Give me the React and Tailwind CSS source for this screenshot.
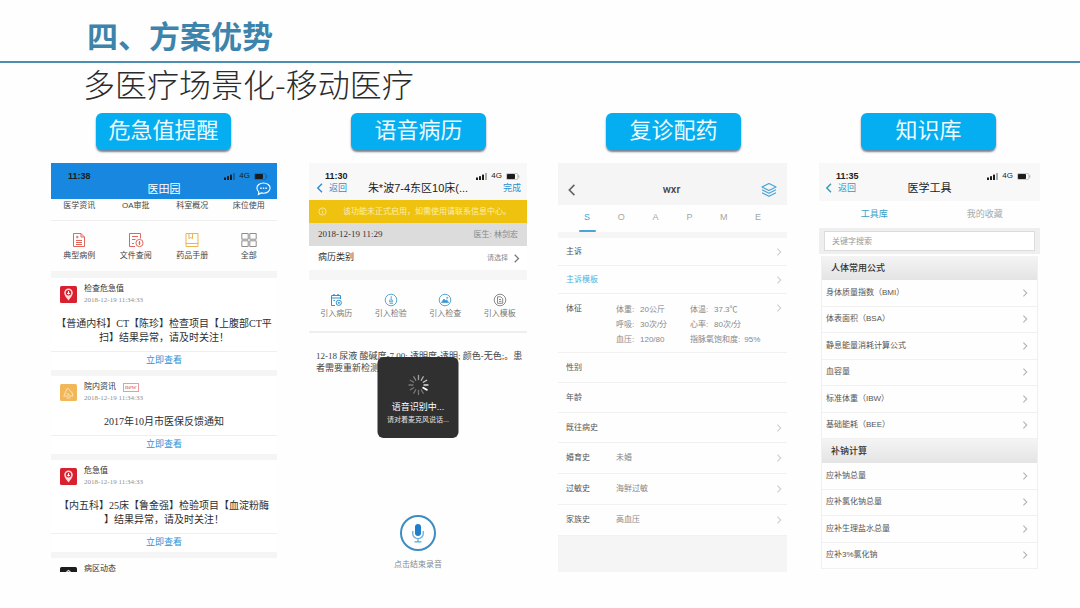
import React, { useState } from "react";

const entries = ["医学资讯", "OA审批", "科室概况", "床位使用"];

const messages = [
  {
    id: 1,
    type: "alert",
    title: "检查危急值",
    lines: ["【普通内科】CT【陈珍】检查项目【上腹部CT平", "扫】结果异常，请及时关注！"],
  },
  {
    id: 2,
    type: "news",
    title: "院内资讯",
    tag: "new",
    lines: ["2017年10月市医保反馈通知"],
  },
  {
    id: 3,
    type: "alert",
    title: "危急值",
    lines: ["【内五科】25床【鲁金强】检验项目【血淀粉酶", "】结果异常，请及时关注！"],
  },
];

const vitals = [
  ["体重:", "20公斤", "体温:", "37.3℃"],
  ["呼吸:", "30次/分", "心率:", "80次/分"],
  ["血压:", "120/80", "指脉氧饱和度:", "95%"],
];

const toolGroups = [
  {
    title: "人体常用公式",
    height: "h-[159px]",
    items: [
      "身体质量指数（BMI）",
      "体表面积（BSA）",
      "静息能量消耗计算公式",
      "血容量",
      "标准体重（IBW）",
      "基础能耗（BEE）",
    ],
  },
  {
    title: "补钠计算",
    height: "h-[106px]",
    items: ["应补钠总量", "应补氯化钠总量", "应补生理盐水总量", "应补3%氯化钠"],
  },
];

const Chevron = ({ className = "text-[#c4c4c4]", flip = false, size = 9 }) => (
  <svg
    width={size}
    height={size}
    viewBox="0 0 10 10"
    fill="none"
    stroke="currentColor"
    strokeWidth="1.4"
    className={`shrink-0 ${className}`}
  >
    <path d={flip ? "M7 .8 2.8 5 7 9.2" : "M3 .8 7.2 5 3 9.2"} />
  </svg>
);

const StatusBar = ({ time, className = "" }) => (
  <div className={`flex items-center justify-between h-3 text-[#1c1c1c] ${className}`}>
    <span className="text-[9px] leading-3 font-bold">{time}</span>
    <span className="flex items-center gap-1">
      <svg width="11" height="7" viewBox="0 0 11 7" fill="currentColor">
        <rect x="0" y="4.5" width="2" height="2.5" />
        <rect x="3" y="3.2" width="2" height="3.8" />
        <rect x="6" y="1.6" width="2" height="5.4" />
        <rect x="9" y="0" width="2" height="7" opacity=".35" />
      </svg>
      <span className="text-[8px] leading-3">4G</span>
      <svg width="14" height="7" viewBox="0 0 14 7">
        <rect x=".4" y=".4" width="11.4" height="6.2" rx="1.4" fill="none" stroke="currentColor" strokeWidth=".6" opacity=".4" />
        <rect x="1" y="1" width="8" height="5" rx=".8" fill="currentColor" />
        <path d="M12.8 2.3v2.4" stroke="currentColor" strokeWidth=".8" opacity=".4" />
      </svg>
    </span>
  </div>
);

const CaseIcon = () => (
  <svg width="16" height="16" viewBox="0 0 16 16" fill="none" stroke="#e2665c" strokeWidth="1">
    <path d="M2.5 1.5h7.5l3.5 3.5v9.5h-11z" />
    <path d="M10 1.5V5h3.5M5 5h2.5M6.2 3.8v2.5M5 8.5h6M5 10.5h6M5 12.5h6" />
  </svg>
);

const FileSearchIcon = () => (
  <svg width="16" height="16" viewBox="0 0 16 16" fill="none" stroke="#e2665c" strokeWidth="1">
    <path d="M12.5 6.5v-5h-11v13H7M4 4.5h6M4 7.5h3.5M4 11.5h2" />
    <circle cx="11.5" cy="11" r="3.6" />
    <path d="M11.5 9v4M10.5 11h2" />
  </svg>
);

const ManualIcon = () => (
  <svg width="16" height="16" viewBox="0 0 16 16" fill="none" stroke="#eab54c" strokeWidth="1">
    <path d="M2 1.5h12v13H2zM2 11.5h12" />
    <path d="M5 1.5v5.2L6.7 5.5l1.8 1.2V1.5" />
  </svg>
);

const GridIcon = () => (
  <svg width="16" height="16" viewBox="0 0 16 16" fill="none" stroke="#8d8d8d" strokeWidth="1">
    <path d="M.8 1.5h6.4v5.7H.8zM8.8 1.5h6.4v5.7H8.8zM.8 8.8h6.4v5.7H.8zM8.8 8.8h6.4v5.7H8.8z" />
  </svg>
);

const AlertAvatar = () => (
  <svg width="17" height="17" viewBox="0 0 17 17" className="shrink-0">
    <rect width="17" height="17" rx="1.5" fill="#d9202e" />
    <path d="M8.5 14.6C6.6 11.9 4.2 9.6 4.2 6.8a4.3 4.3 0 0 1 8.6 0c0 2.8-2.4 5.1-4.3 7.8z" fill="#fbdcdc" />
    <circle cx="8.5" cy="6.7" r="2.7" fill="#d9202e" />
    <path d="M8.5 5v3.4M7 7.4h3" stroke="#fff" strokeWidth="1" />
  </svg>
);

const NewsAvatar = () => (
  <svg width="17" height="17" viewBox="0 0 17 17" className="shrink-0">
    <rect width="17" height="17" rx="1.5" fill="#f2b858" />
    <path d="M4 11.5 7.5 4l5 5.2M3.5 12h9.5l-1-3M6.5 9.5l3 1" fill="none" stroke="#fbe3b8" strokeWidth="1" />
    <path d="M6.5 14h4" stroke="#fbe3b8" strokeWidth="1" />
  </svg>
);

const shortcuts = [
  { label: "典型病例", icon: <CaseIcon /> },
  { label: "文件查阅", icon: <FileSearchIcon /> },
  { label: "药品手册", icon: <ManualIcon /> },
  { label: "全部", icon: <GridIcon /> },
];

const imports = [
  {
    label: "引入病历",
    icon: (
      <svg width="14" height="14" viewBox="0 0 14 14" fill="none" stroke="#2f93cf" strokeWidth="1">
        <path d="M11.5 6V2.5h-9v10H6M2.5 5h9" />
        <path d="M5 1v2M9 1v2" strokeWidth="1.4" />
        <circle cx="9.8" cy="9.8" r="2.6" />
        <path d="M8.8 9.8h2M9.8 8.8v2M4.5 7.5H6" />
      </svg>
    ),
  },
  {
    label: "引入检验",
    icon: (
      <svg width="14" height="14" viewBox="0 0 14 14" fill="none" stroke="#5aa7d6" strokeWidth="1">
        <circle cx="7" cy="7" r="5.8" />
        <path d="M7.2 3.2v4.4M5.5 10.3h3.6M6 6.5l-.6 2.2h3.4l-1-2.2" />
      </svg>
    ),
  },
  {
    label: "引入检查",
    icon: (
      <svg width="14" height="14" viewBox="0 0 14 14" fill="none" stroke="#5aa7d6" strokeWidth="1">
        <circle cx="7" cy="7" r="5.8" />
        <path d="M3.5 9.6 6 6l1.6 2 1-1.2 2 2.8z" fill="#2f93cf" />
        <circle cx="9.2" cy="4.8" r=".6" />
      </svg>
    ),
  },
  {
    label: "引入模板",
    icon: (
      <svg width="14" height="14" viewBox="0 0 14 14" fill="none" stroke="#8a8a8a" strokeWidth="1">
        <circle cx="7" cy="7" r="5.8" />
        <path d="M4.5 3.8h3.3l1.9 1.9v4.6H4.5zM6 6.5h2M6 8.4h2.4" />
      </svg>
    ),
  },
];

const Scene = ({ title, className, children }) => (
  <section className="flex flex-col items-stretch">
    <h3 className="self-center w-[135px] h-[37px] rounded-md bg-[#04aef0] text-[#effbff] text-[22px] leading-9 text-center shadow-[0_2px_2px_rgba(70,90,110,0.75)]">
      {title}
    </h3>
    <div className={`mt-[13px] overflow-hidden ${className}`}>{children}</div>
  </section>
);

const MessageCard = ({ type, title, tag, lines }) => (
  <article className="pt-2 border-b-6 border-[#f5f5f5] bg-white">
    <div className="flex items-start gap-[7px] px-[9px] h-[17px]">
      {type === "alert" ? <AlertAvatar /> : <NewsAvatar />}
      <div className="-mt-[3px]">
        <h4 className="flex items-center gap-[7px] text-[8px] leading-3 text-[#333]">
          {title}
          {tag && (
            <span className="border border-[#ec9a9a] text-[#e05a5a] text-[7px] leading-[7px] px-px font-['Liberation_Serif',serif]">
              {tag}
            </span>
          )}
        </h4>
        <p className="text-[7px] leading-[10px] text-[#8f8f8f] font-['Liberation_Serif',serif]">2018-12-19 11:34:33</p>
      </div>
    </div>
    <p className="mt-[14px] mb-[6px] text-[10px] leading-[14px] text-center whitespace-nowrap text-[#2e2e2e] font-['Liberation_Serif','Noto_Sans_CJK_SC',serif]">
      {lines.map((line) => (
        <span key={line} className="block">
          {line}
        </span>
      ))}
    </p>
    <a href="#detail" className="block border-t border-[#efefef] h-[19px] text-[9px] leading-4 text-center text-[#2a92d6]">
      立即查看
    </a>
  </article>
);

const AlertPhone = () => (
  <>
    <header className="h-9 bg-[#1787e0] pt-[7px]">
      <StatusBar time="11:38" className="pl-[17px] pr-[9px]" />
      <div className="grid grid-cols-3 items-center h-3 px-[6px]">
        <h2 className="col-start-2 text-[11px] leading-3 text-center text-white">医田园</h2>
        <button aria-label="消息" className="justify-self-end">
          <svg width="15" height="14" viewBox="0 0 15 14" fill="none" stroke="#fff" strokeWidth="1.1">
            <path d="M7.5 1c3.7 0 6.6 2.3 6.6 5.1s-2.900 5.100-6.600 5.100c-.8 0-1.600-.1-2.300-.3L2.400 12.400l.4-2.500C1.600 9 .9 7.600.9 6.100.9 3.300 3.800 1 7.500 1z" />
            <path d="M4.200 6.200h1.400M6.800 6.200h1.400M9.400 6.200h1.400" strokeWidth="1.500" />
          </svg>
        </button>
      </div>
    </header>
    <ul className="grid grid-cols-4 h-[22px] border-b border-[#eee]">
      {entries.map((entry) => (
        <li key={entry} className="text-[8px] leading-[14px] text-center text-[#444]">
          {entry}
        </li>
      ))}
    </ul>
    <nav className="grid grid-cols-4 pt-[11px] pb-[9px] border-b-7 border-[#f5f5f5]">
      {shortcuts.map(({ label, icon }) => (
        <button key={label} className="flex flex-col items-center gap-[2px] text-[8px] leading-3 text-[#444]">
          {icon}
          {label}
        </button>
      ))}
    </nav>
    {messages.map((msg) => (
      <MessageCard key={msg.id} {...msg} />
    ))}
    <article className="flex items-start gap-[7px] px-[9px] pt-[9px] h-[14px] overflow-hidden">
      <svg width="17" height="17" viewBox="0 0 17 17" className="shrink-0">
        <rect width="17" height="17" rx="1.5" fill="#1d1d1d" />
        <path d="M6.500 5 8.500 3.500 10.500 5" fill="none" stroke="#ddd" strokeWidth="1.200" />
      </svg>
      <h4 className="-mt-1 text-[8px] leading-3 text-[#333]">病区动态</h4>
    </article>
  </>
);

const Spinner = () => (
  <svg width="22" height="22" viewBox="0 0 22 22" stroke="#fff" strokeWidth="1.500" strokeLinecap="round">
    {Array.from({ length: 12 }, (_, i) => (
      <path
        key={i}
        d="M11 1.500v4"
        transform={`rotate(${i * 30 + 120} 11 11)`}
        strokeWidth={i === 0 ? 2 : 1.3}
        opacity={i === 0 ? 1 : 0.35 + (i > 6 ? (i - 6) * 0.1 : 0)}
      />
    ))}
  </svg>
);

const VoicePhone = () => (
  <>
    <header className="h-[37px] bg-[#f8f8f8] pt-[7px]">
      <StatusBar time="11:30" className="pl-4 pr-[7px]" />
      <div className="grid grid-cols-[1fr_auto_1fr] items-center h-[11px] px-[6px] text-[9px] leading-3 text-[#2b8fd0]">
        <button className="flex items-center gap-1 justify-self-start">
          <Chevron flip size={10} className="text-[#2b8fd0]" />
          返回
        </button>
        <h2 className="text-[11px] leading-3 whitespace-nowrap text-[#222]">朱*波7-4东区10床(...</h2>
        <button className="justify-self-end">完成</button>
      </div>
    </header>
    <p className="flex items-center h-[23px] pl-[9px] bg-[#efc210] text-[8px] text-[#fbeeb0]">
      <svg width="9" height="9" viewBox="0 0 9 9" fill="none" stroke="#fbeeb0" strokeWidth=".8" className="shrink-0">
        <circle cx="4.500" cy="4.500" r="3.600" />
        <path d="M4.500 4v2.500M4.500 2.300v.8" />
      </svg>
      <span className="ml-4 whitespace-nowrap">该功能未正式启用，如需使用请联系信息中心。</span>
    </p>
    <div className="flex items-center justify-between h-[23px] px-[9px] bg-[#dcdcdc]">
      <time className="text-[9px] text-[#333] font-['Liberation_Serif',serif]">2018-12-19 11:29</time>
      <span className="text-[8px] text-[#888]">医生: 林剑宏</span>
    </div>
    <button className="flex items-center w-full h-6 pl-[9px] pr-[6px] bg-white text-[9px] text-[#333]">
      病历类别
      <span className="ml-auto mr-1 text-[7px] text-[#888]">请选择</span>
      <Chevron className="text-[#777]" />
    </button>
    <nav className="grid grid-cols-4 h-[63px] pt-[13px] border-t-10 border-b-2 border-t-[#f6f6f6] border-b-[#efefef]">
      {imports.map(({ label, icon }) => (
        <button key={label} className="flex flex-col items-center justify-start gap-px text-[8px] leading-3 text-[#777]">
          {icon}
          {label}
        </button>
      ))}
    </nav>
    <div className="relative h-[182px] pt-[17px] px-[7px]">
      <p className="text-[9px] leading-3 text-[#444] font-['Liberation_Serif','Noto_Sans_CJK_SC',serif]">
        <span className="block whitespace-nowrap">12-18 尿液 酸碱度-7.00; 透明度-透明; 颜色-无色;。患</span>
        <span className="block">者需要重新检测。</span>
      </p>
      <div
        role="status"
        className="absolute left-1/2 top-6 -translate-x-1/2 flex flex-col items-center w-[81px] h-[81px] pt-[17px] rounded-md bg-[#303030] text-white whitespace-nowrap"
      >
        <Spinner />
        <span className="mt-1 text-[9px] leading-[14px]">语音识别中...</span>
        <span className="text-[7px] leading-3 text-[#e4e4e4]">请对着麦克风说话...</span>
      </div>
    </div>
    <footer className="flex flex-col items-center gap-2 pb-[2px] text-[8px] leading-3 text-[#888]">
      <button aria-label="结束录音" className="grid place-items-center size-9 rounded-full border-2 border-[#3d8cc2]">
        <svg width="14" height="20" viewBox="0 0 14 20" fill="none" stroke="#5aa7dc" strokeWidth="1.200">
          <rect x="4" y="1" width="6" height="12" rx="3" fill="#1f7fcd" stroke="none" />
          <path d="M1.800 8v3a5.200 4.500 0 0 0 10.400 0V8M7 15.500v3M3.500 18.800h7" />
        </svg>
      </button>
      <span>点击结束录音</span>
    </footer>
  </>
);

const RecordRow = ({ label, value, className, arrow = true }) => (
  <button className={`flex items-center w-full pl-2 pr-1 border-b border-[#f1f1f1] text-left text-[8px] ${className}`}>
    <span className="w-[50px] shrink-0">{label}</span>
    <span className="flex-1 text-[#888]">{value}</span>
    {arrow && <Chevron className="text-[#cfcfcf]" size={8} />}
  </button>
);

const RecordPhone = () => {
  const [tab, setTab] = useState("S");

  return (
    <>
      <header className="grid grid-cols-3 items-center h-[42px] pt-3 pl-2 pr-[10px] bg-[#f6f5f6]">
        <button aria-label="返回" className="justify-self-start">
          <Chevron flip size={12} className="text-[#666]" />
        </button>
        <h2 className="text-[11px] text-center font-medium text-[#444] font-[Roboto,sans-serif]">wxr</h2>
        <button aria-label="图层" className="justify-self-end">
          <svg width="16" height="16" viewBox="0 0 16 16" fill="none" stroke="#4ba3d6" strokeWidth="1.200" strokeLinejoin="round">
            <path d="M8 1.500 15 5 8 8.500 1 5z" />
            <path d="m1 7.800 7 3.500 7-3.500M1 10.800l7 3.500 7-3.500" />
          </svg>
        </button>
      </header>
      <nav className="grid grid-cols-6 px-3 h-[33px] border-b-6 border-[#f6f6f6]">
        {["S", "O", "A", "P", "M", "E"].map((name) => (
          <button
            key={name}
            onClick={() => setTab(name)}
            className={`flex flex-col items-center justify-between pt-[6px] text-[9px] leading-3 ${
              tab === name ? "text-[#4ba3d6]" : "text-[#a5a5a5]"
            }`}
          >
            {name}
            {tab === name && <span className="w-[17px] h-[2px] rounded-full bg-[#4ba3d6]" />}
          </button>
        ))}
      </nav>
      <RecordRow label="主诉" className="h-7 text-[#555]" />
      <RecordRow label="主诉模板" className="h-7 text-[#4fb0e0]" />
      <div className="flex items-start h-[59px] pl-2 pr-1 pt-2 border-b border-[#f1f1f1] text-[8px] text-[#888]">
        <span className="w-[50px] shrink-0 leading-[13px] text-[#555]">体征</span>
        <table className="leading-[15px] whitespace-nowrap">
          <tbody>
            {vitals.map(([nameA, valueA, nameB, valueB]) => (
              <tr key={nameA}>
                <td className="p-0 w-6">{nameA}</td>
                <td className="p-0 w-[50px]">{valueA}</td>
                <td className="p-0">
                  <span className="inline-block min-w-5">{nameB}</span>
                  <span className="pl-1">{valueB}</span>
                </td>
              </tr>
            ))}
          </tbody>
        </table>
        <Chevron className="ml-auto mt-[2px] text-[#cfcfcf]" size={8} />
      </div>
      <RecordRow label="性别" className="h-[30px] text-[#555]" arrow={false} />
      <RecordRow label="年龄" className="h-[30px] text-[#555]" arrow={false} />
      <RecordRow label="既往病史" className="h-[30px] text-[#555]" />
      <RecordRow label="婚育史" value="未婚" className="h-[31px] text-[#555]" />
      <RecordRow label="过敏史" value="海鲜过敏" className="h-[31px] text-[#555]" />
      <RecordRow label="家族史" value="高血压" className="h-[31px] text-[#555]" />
      <div className="h-9 bg-[#f6f5f6]" />
    </>
  );
};

const ToolsPhone = () => {
  const [keyword, setKeyword] = useState("");

  return (
    <>
      <header className="h-[38px] bg-[#f8f8f8] pt-[7px]">
        <StatusBar time="11:35" className="pl-[17px] pr-[9px]" />
        <div className="grid grid-cols-3 items-center h-3 px-[5px]">
          <button className="flex items-center gap-1 text-[9px] leading-3 text-[#3399bd]">
            <Chevron flip size={10} className="text-[#3399bd]" />
            返回
          </button>
          <h2 className="text-[11px] leading-3 text-center whitespace-nowrap text-[#222]">医学工具</h2>
        </div>
      </header>
      <nav className="grid grid-cols-2 h-[27px] text-[9px]">
        <button className="text-[#3a9fc6]">工具库</button>
        <button className="text-[#aaa]">我的收藏</button>
      </nav>
      <div className="px-[5px] py-[3px] bg-[#efefef]">
        <input
          type="text"
          aria-label="关键字搜索"
          value={keyword}
          onChange={(e) => setKeyword(e.target.value)}
          placeholder="关键字搜索"
          className="block w-full h-5 px-[7px] border border-[#dcdcdc] bg-white text-[8px] placeholder-[#999] outline-none"
        />
      </div>
      <div className="mx-[2px] mt-[2px] border-x border-[#f0f0f0]">
        {toolGroups.map(({ title, height, items }) => (
          <section key={title}>
            <h4 className="h-6 pl-[9px] bg-linear-to-b from-[#f4f4f4] to-[#e4e4e4] text-[9px] leading-6 font-medium text-[#333]">
              {title}
            </h4>
            <ul className={`flex flex-col ${height}`}>
              {items.map((item) => (
                <li key={item} className="flex-1 border-b border-[#f1f1f1]">
                  <button className="flex items-center justify-between w-full h-full pl-1 pr-2 text-[8px] text-[#555]">
                    {item}
                    <Chevron className="text-[#b5b5b5]" size={8} />
                  </button>
                </li>
              ))}
            </ul>
          </section>
        ))}
      </div>
    </>
  );
};

const App = () => {
  return (
    <main className="min-h-screen bg-[#fefefe] overflow-hidden font-['Liberation_Sans','Noto_Sans_CJK_SC',sans-serif]">
      <h1 className="pt-[22px] pb-[7px] pl-[87px] border-b-2 border-[#4c8db2] text-[31px] leading-8 font-bold text-[#3d84ac]">
        四、方案优势
      </h1>
      <h2 className="pl-[83px] text-[32px] leading-10 font-light text-[#2b2b2b] font-['Noto_Sans_CJK_SC',sans-serif]">
        多医疗场景化-移动医疗
      </h2>

      <div className="grid grid-cols-4 mt-[10px] pl-9 pr-6">
        <Scene title="危急值提醒" className="ml-[15px] mr-[14px]">
          <AlertPhone />
        </Scene>
        <Scene title="语音病历" className="ml-[18px] mr-[19px]">
          <VoicePhone />
        </Scene>
        <Scene title="复诊配药" className="ml-3 mr-[14px]">
          <RecordPhone />
        </Scene>
        <Scene title="知识库" className="ml-[18px] mr-4">
          <ToolsPhone />
        </Scene>
      </div>
    </main>
  );
};

export default App;
